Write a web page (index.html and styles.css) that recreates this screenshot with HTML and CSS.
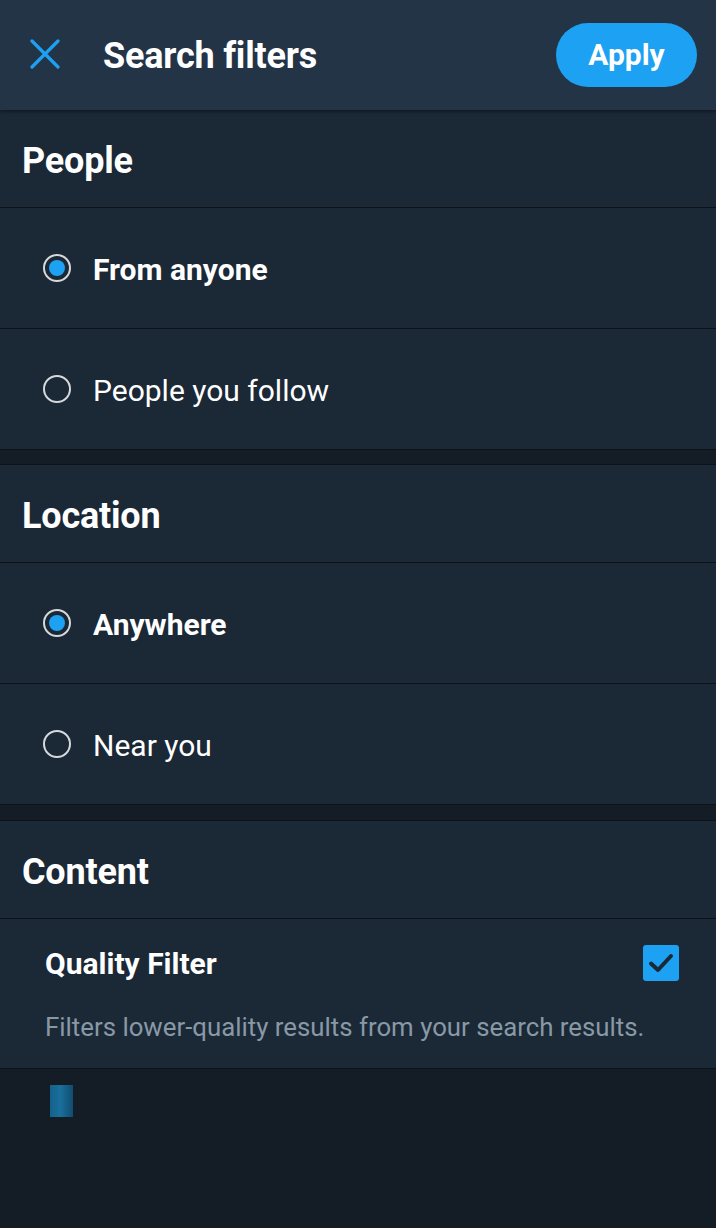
FILE: index.html
```html
<!DOCTYPE html>
<html lang="en">
<head>
<meta charset="utf-8">
<title>Search filters</title>
<link rel="stylesheet" href="styles.css">
</head>
<body>
<div class="app">
  <header class="topbar">
    <button class="close" aria-label="Close">
      <svg width="30" height="30" viewBox="0 0 30 30"><path d="M2 2 L28 28 M28 2 L2 28" stroke="#1da1f2" stroke-width="3.2" stroke-linecap="round" fill="none"/></svg>
    </button>
    <h1 class="title">Search filters</h1>
    <button class="apply">Apply</button>
  </header>

  <section class="section first">
    <h2 class="section-title">People</h2>
    <div class="row"><span class="radio checked"></span><span class="label bold">From anyone</span></div>
    <div class="row"><span class="radio"></span><span class="label">People you follow</span></div>
  </section>

  <section class="section">
    <h2 class="section-title">Location</h2>
    <div class="row"><span class="radio checked"></span><span class="label bold">Anywhere</span></div>
    <div class="row"><span class="radio"></span><span class="label">Near you</span></div>
  </section>

  <section class="section gap-lg">
    <h2 class="section-title">Content</h2>
    <div class="quality">
      <div class="quality-top">
        <span class="quality-title">Quality Filter</span>
        <span class="checkbox">
          <svg width="36" height="36" viewBox="0 0 36 36"><path d="M8 18.5 L15 25 L28 11" stroke="#1b2836" stroke-width="4" fill="none" stroke-linecap="round" stroke-linejoin="round"/></svg>
        </span>
      </div>
      <p class="quality-desc">Filters lower-quality results from your search results.</p>
    </div>
  </section>

  <div class="footer">
    <div class="stub"></div>
  </div>
</div>
</body>
</html>
```
FILE: styles.css
```css
* { box-sizing: border-box; }
html, body {
  margin: 0;
  padding: 0;
  background: #141d26;
  font-family: Roboto, "Noto Sans", Arial, sans-serif;
  color: #ffffff;
}
.app {
  width: 716px;
  min-height: 1228px;
  background: #141d26;
}
.topbar {
  height: 110px;
  background: #243447;
  display: flex;
  align-items: center;
  padding: 0 19px 0 30px;
  box-shadow: 0 2px 3px rgba(0,0,0,0.35);
  position: relative;
  z-index: 1;
}
.close {
  background: none;
  border: 0;
  padding: 0;
  width: 30px;
  height: 30px;
  margin-top: -2px;
  display: flex;
}
.title {
  margin: 2px 0 0 43px;
  font-size: 36px;
  font-weight: 700;
  letter-spacing: -0.2px;
  flex: 1;
  line-height: 1;
}
.apply {
  width: 141px;
  height: 64px;
  border-radius: 32px;
  background: #1da1f2;
  border: 0;
  color: #fff;
  font-family: Roboto, "Noto Sans", Arial, sans-serif;
  font-size: 30px;
  font-weight: 700;
  margin-top: -1px;
}
.section {
  background: #1b2836;
  border-top: 1px solid #0c1218;
}
.section + .section { margin-top: 14px; }
.section.gap-lg { margin-top: 15px; }
.section.first { border-top: 0; }
.section-title {
  margin: 0;
  height: 98px;
  border-bottom: 1px solid #0c1218;
  display: flex;
  align-items: center;
  padding-left: 22px;
  padding-top: 4px;
  font-size: 36px;
  font-weight: 700;
  letter-spacing: -0.2px;
}
.row {
  height: 121px;
  border-bottom: 1px solid #0c1218;
  display: flex;
  align-items: center;
  padding-left: 43px;
}
.radio {
  width: 28px;
  height: 28px;
  border-radius: 50%;
  border: 2.5px solid #d6d9dc;
  display: flex;
  align-items: center;
  justify-content: center;
  flex: none;
  margin-top: -1px;
}
.radio.checked::after {
  content: "";
  width: 16px;
  height: 16px;
  border-radius: 50%;
  background: #1da1f2;
}
.label {
  margin-left: 22px;
  font-size: 30px;
  font-weight: 400;
  margin-top: 2px;
}
.label.bold { font-weight: 700; }
.quality {
  height: 150px;
  border-bottom: 1px solid #0c1218;
  padding: 26px 37px 0 45px;
}
.quality-top {
  display: flex;
  align-items: center;
  justify-content: space-between;
  height: 36px;
}
.quality-title {
  font-size: 30px;
  font-weight: 700;
  margin-top: 1px;
}
.checkbox {
  width: 36px;
  height: 36px;
  border-radius: 3px;
  background: #1da1f2;
  display: flex;
}
.quality-desc {
  margin: 34px 0 0 0;
  font-size: 25.8px;
  color: #8899a6;
  line-height: 1;
}
.footer {
  padding: 16px 0 0 50px;
}
.stub {
  width: 23px;
  height: 32px;
  background: linear-gradient(90deg, #14618b 0%, #1a6f9c 45%, #0f4d6f 100%);
}
```
